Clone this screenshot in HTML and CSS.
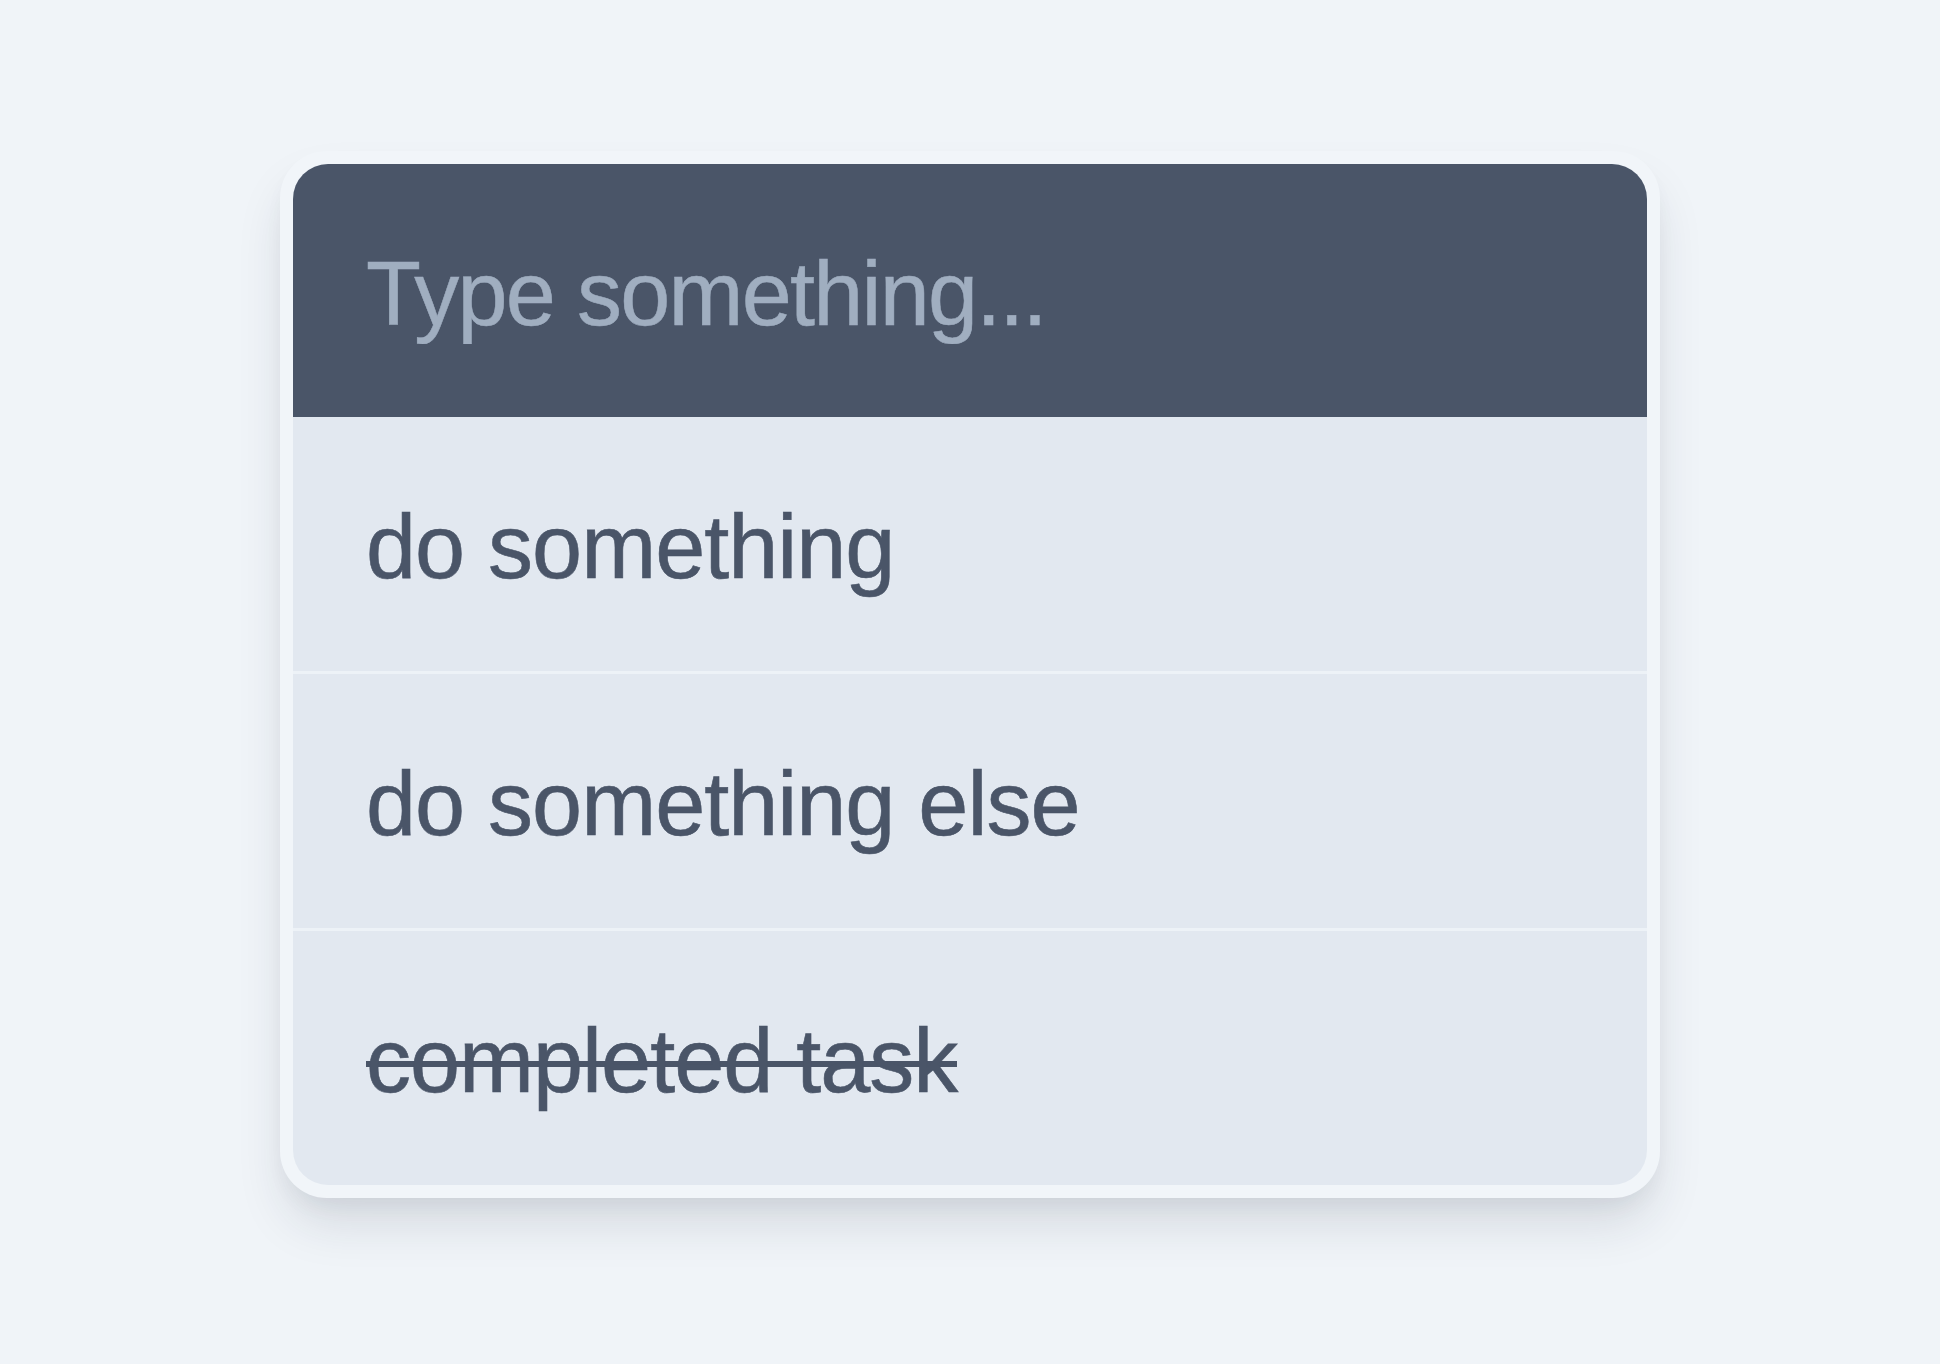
FILE: index.html
```html
<!DOCTYPE html>
<html lang="en">

<head>
    <meta charset="UTF-8">
    <meta name="viewport" content="width=device-width, initial-scale=1.0">
    <title>Todo</title>
    <link rel="stylesheet" href="styles.css">
</head>

<body>
    <div id="container">
        <div class="todo">
            <div class="todo-inner">
                <div class="new-task">
                    <input type="text" id="task" placeholder="Type something...">
                </div>
                <ul class="tasks">
                    <li>do something</li>
                    <li>do something else</li>
                    <li class="done"><span>completed task</span></li>
                </ul>
            </div>
        </div>
    </div>
</body>
</html>
```

FILE: styles.css
```css
html,
body {
    margin: 0;
    min-height: 100%;
    background-color: #f0f4f8;
}

body {
    font-family: "Liberation Sans", Arial, sans-serif;
}

#container {
    padding-top: 151px;
    padding-bottom: 164px;
    display: flex;
    justify-content: center;
}

.todo {
    width: 1380px;
    padding: 13px;
    box-sizing: border-box;
    border-radius: 47px;
    background-color: #f1f5f9;
    box-shadow: 0 30px 50px -6px rgba(30, 41, 59, 0.13), 0 12px 24px -8px rgba(30, 41, 59, 0.07);
}

.todo-inner {
    border-radius: 35px;
    overflow: hidden;
    background-color: #e2e8f0;
}

.new-task {
    background-color: #4a5568;
    padding: 80px 73px 73px;
}

.new-task input {
    display: block;
    width: 100%;
    height: 100px;
    padding: 0;
    border: 0;
    outline: none;
    background: transparent;
    color: #e2e8f0;
    font-family: inherit;
    font-size: 90px;
    letter-spacing: -1.8px;
    -webkit-text-stroke: 0.5px #a0aec0;
}

.new-task input::placeholder {
    color: #a0aec0;
}

ul.tasks {
    list-style: none;
    margin: 0;
    padding: 0;
}

ul.tasks li {
    padding: 80px 73px 74px;
    line-height: 100px;
    font-size: 90px;
    letter-spacing: -1px;
    color: #4a5568;
    -webkit-text-stroke: 0.6px #4a5568;
    border-bottom: 3px solid #edf2f7;
}

ul.tasks li:last-child {
    border-bottom: none;
}

/* strike line drawn as a band so it can be thick */
ul.tasks li.done span {
    background-image: linear-gradient(#4a5568, #4a5568);
    background-repeat: no-repeat;
    background-size: 100% 6px;
    background-position: 0 50px;
}
```
